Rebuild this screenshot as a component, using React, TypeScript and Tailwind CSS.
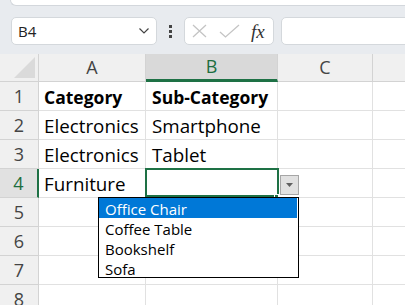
import React from "react";

const cols = [
  { key: "A", w: "w-[107px]" },
  { key: "B", w: "w-[132px]" },
  { key: "C", w: "w-[95px]" },
];

const data: { a: string; b: string; bold?: boolean }[] = [
  { a: "Category", b: "Sub-Category", bold: true },
  { a: "Electronics", b: "Smartphone" },
  { a: "Electronics", b: "Tablet" },
  { a: "Furniture", b: "" },
  { a: "", b: "" },
  { a: "", b: "" },
  { a: "", b: "" },
  { a: "", b: "" },
];

const items = ["Office Chair", "Coffee Table", "Bookshelf", "Sofa"];

function Dropdown() {
  return (
    <>
      <div className="absolute left-[-1px] top-[-1px] w-[134px] h-[29px] border-2 border-[#1e7145] pointer-events-none z-10" />
      <div className="absolute left-[128px] top-[25px] w-[5px] h-[5px] bg-[#1e7145] border border-white z-10" />
      <div className="absolute left-[134px] top-[6px] w-[19px] h-[20px] bg-[#e1e1e1] border border-[#a6a6a6] flex items-center justify-center z-20">
        <svg width="7" height="4" viewBox="0 0 7 4">
          <path d="M0 0 L7 0 L3.5 4 Z" fill="#606060" />
        </svg>
      </div>
      <div className="absolute left-[-48px] top-[28px] w-[201px] h-[81px] bg-white border border-black z-30 font-['Open_Sans',sans-serif] text-[15px] leading-[20px] text-black font-normal">
        {items.map((it, i) => (
          <div
            key={it}
            className={
              i === 0
                ? "h-[20px] pl-[6px] pt-[1px] bg-[#0078d7] text-white mr-[1px]"
                : "h-[20px] pl-[6px] pt-[1px]"
            }
          >
            {it}
          </div>
        ))}
      </div>
    </>
  );
}

export default function App() {
  return (
    <div className="w-[405px] h-[305px] overflow-hidden bg-[#e8ebef] font-['Open_Sans',sans-serif]">
      <div className="ml-[10px] h-[6px] bg-white rounded-bl-[8px] border-b border-l border-[#d3d7dc]" />
      <div className="flex items-center mt-[11px] h-[28px] pl-[11px]">
        <div className="w-[146px] h-[28px] bg-white rounded-[5px] border border-[#d4d8dc] flex items-center justify-between pl-[6px] pr-[6px]">
          <span className="text-[15px] text-[#222] leading-none">B4</span>
          <svg width="12" height="8" viewBox="0 0 12 8">
            <path d="M1.5 1.5 L6 6 L10.5 1.5" fill="none" stroke="#444" strokeWidth="1.2" />
          </svg>
        </div>
        <div className="w-[27px] flex flex-col items-center justify-center gap-[2px]">
          <div className="w-[3px] h-[3px] bg-[#444]" />
          <div className="w-[3px] h-[3px] bg-[#444]" />
          <div className="w-[3px] h-[3px] bg-[#444]" />
        </div>
        <div className="w-[90px] h-[28px] bg-white rounded-[5px] border border-[#d4d8dc] flex items-center pl-[7px]">
          <svg width="15" height="14" viewBox="0 0 15 14">
            <path d="M1 1 L14 13 M14 1 L1 13" stroke="#c4c4c4" strokeWidth="1.3" fill="none" />
          </svg>
          <svg width="21" height="14" viewBox="0 0 21 14" className="ml-[12px]">
            <path d="M1 8 L6.5 13 L20 1" stroke="#c4c4c4" strokeWidth="1.3" fill="none" />
          </svg>
          <span className="ml-[11px] font-['Liberation_Serif',serif] italic text-[19px] leading-none text-[#333]">
            fx
          </span>
        </div>
        <div className="ml-[7px] flex-1 -mr-4 h-[28px] bg-white rounded-[5px] border border-[#d4d8dc]" />
      </div>
      <div className="mt-[9px] bg-white">
        <div className="flex h-[28px]">
          <div className="w-[39px] shrink-0 bg-[#f0f0f0] border-r border-b border-[#d3d3d3] relative">
            <svg width="22" height="21" viewBox="0 0 22 21" className="absolute left-[14px] top-[3px]">
              <path d="M21 0 L21 21 L0 21 Z" fill="#dadada" />
            </svg>
          </div>
          {cols.map((c) =>
            c.key === "B" ? (
              <div
                key={c.key}
                className={`${c.w} shrink-0 bg-[#d9d9d9] border-r border-[#d3d3d3] border-b-[3px] border-b-[#1e7145] flex items-center justify-center text-[18px] text-[#1e6e3f]`}
              >
                {c.key}
              </div>
            ) : (
              <div
                key={c.key}
                className={`${c.w} shrink-0 bg-[#f0f0f0] border-r border-b border-[#d3d3d3] flex items-center justify-center text-[18px] text-[#444]`}
              >
                {c.key}
              </div>
            )
          )}
          <div className="flex-1 bg-[#f0f0f0] border-b border-[#d3d3d3]" />
        </div>
        {data.map((r, i) => {
          const sel = i === 3;
          const txt = r.bold
            ? "font-bold text-[17.5px] leading-[25px] pt-[3px]"
            : "text-[18.8px] leading-[25px] pt-[3px]";
          return (
            <div key={i} className="flex h-[29px]">
              <div
                className={
                  sel
                    ? "w-[39px] shrink-0 bg-[#e1e1e1] border-r-2 border-r-[#1e7145] border-b border-b-[#d3d3d3] flex items-center justify-center pt-[1px] text-[18px] text-[#1e6e3f]"
                    : "w-[39px] shrink-0 bg-[#f0f0f0] border-r border-b border-[#d3d3d3] flex items-center justify-center pt-[1px] text-[18px] text-[#444]"
                }
              >
                {i + 1}
              </div>
              <div
                className={`w-[107px] shrink-0 border-r border-b border-[#e1e1e1] pl-[5px] text-black whitespace-nowrap overflow-visible ${txt}`}
              >
                {r.a}
              </div>
              <div
                className={`w-[132px] shrink-0 border-r border-b border-[#e1e1e1] pl-[6px] text-black whitespace-nowrap relative ${txt}`}
              >
                {r.b}
                {sel && <Dropdown />}
              </div>
              <div className="w-[95px] shrink-0 border-r border-b border-[#e1e1e1]" />
              <div className="flex-1 border-b border-[#e1e1e1]" />
            </div>
          );
        })}
      </div>
    </div>
  );
}
